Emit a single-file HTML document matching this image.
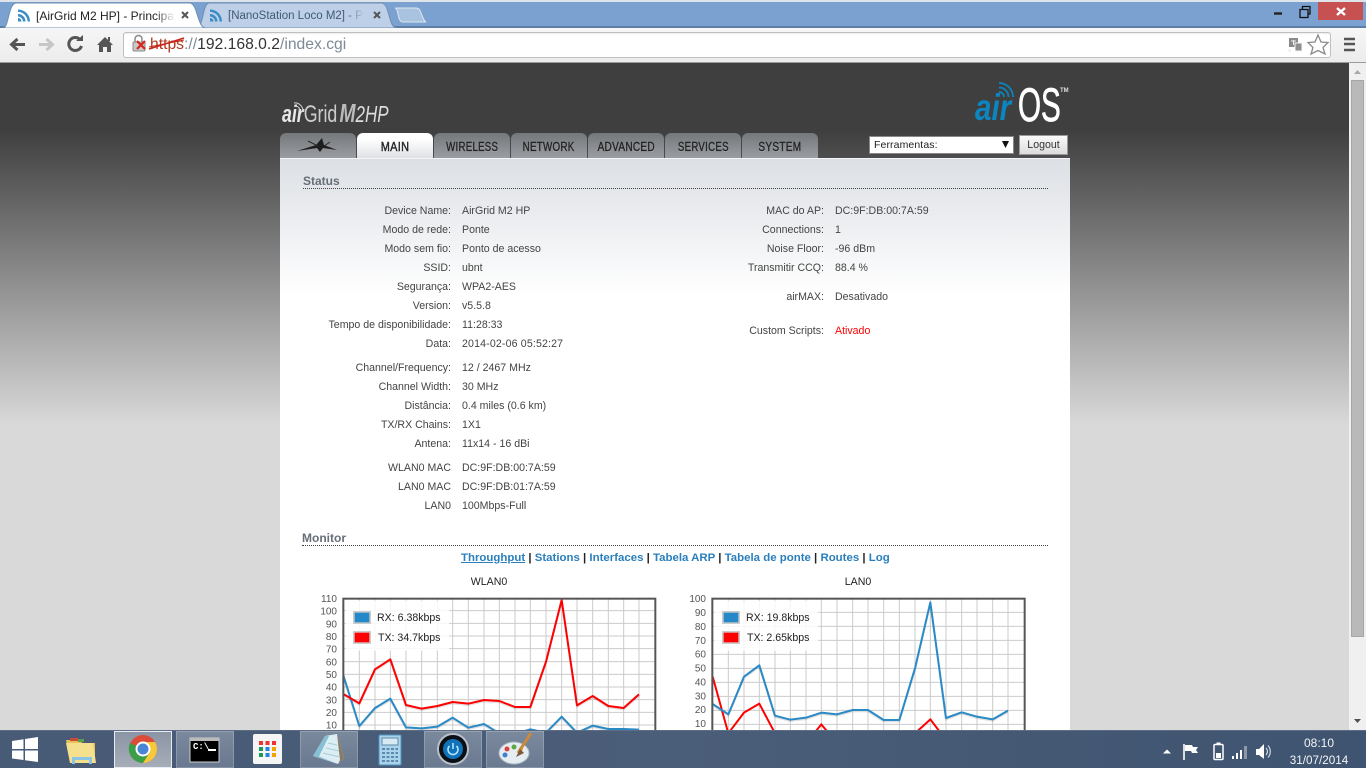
<!DOCTYPE html>
<html><head><meta charset="utf-8"><title>airOS</title>
<style>
html,body{margin:0;padding:0;width:1366px;height:768px;overflow:hidden;font-family:"Liberation Sans",sans-serif}
#root{position:relative;width:1366px;height:768px;overflow:hidden;background:#d9d9d9}
.a{position:absolute;white-space:nowrap}
.l,.v{position:absolute;white-space:nowrap;font-size:10.6px;line-height:14px;color:#444;margin-top:1px}
.l{text-align:right;width:200px}
.tab{position:absolute;top:133px;height:25px;width:76px;border-radius:6px 6px 0 0;background:linear-gradient(#74777a,#9a9da2);text-align:center}
.tab span{display:inline-block;font-size:13px;line-height:27px;color:#262626;font-weight:normal;text-shadow:0 1px 0 rgba(255,255,255,.25);-webkit-text-stroke:.4px #222;letter-spacing:.4px}
.btn{position:absolute;top:731px;height:37px;background:linear-gradient(rgba(255,255,255,.28),rgba(255,255,255,.18));box-shadow:inset 0 0 0 1px rgba(255,255,255,.2)}
.yl{font-size:10px;fill:#555;font-family:"Liberation Sans",sans-serif;text-anchor:end}
.lg{font-size:10.6px;fill:#222;font-family:"Liberation Sans",sans-serif}
a{color:#2a7fbd;text-decoration:none}
</style></head><body><div id="root">

<!-- page background -->
<div class="a" style="left:0;top:63px;width:1349px;height:667px;background:linear-gradient(#3f3f3f 0,#3f3f3f 67px,#d9d9d9 362px)"></div>

<!-- logos -->
<div class="a" style="left:282px;top:98px;color:#e8e8e8;font-size:24px;line-height:30px;transform-origin:0 0;transform:scaleX(.74)"><i style="font-weight:bold">air</i><span style="color:#ccc;">Grid</span><i style="font-weight:bold;color:#bbb;font-size:26px;margin:0 0 0 3px">M</i><i style="color:#ddd;font-size:23px">2HP</i></div>
<svg class="a" style="left:292px;top:100px" width="12" height="12" fill="none" stroke="#cfcfcf" stroke-width="1"><path d="M2 6a5 5 0 0 1 6 5M2 3a8 8 0 0 1 9 8"/></svg>

<div class="a" style="left:975px;top:88px;color:#0b86c0;font-size:37px;line-height:40px;font-weight:bold;font-style:italic;transform-origin:0 0;transform:scaleX(.8)">air</div>
<div class="a" style="left:1018px;top:80px;color:#fff;font-size:47px;line-height:50px;transform-origin:0 0;transform:scaleX(.63);-webkit-text-stroke:.8px #fff">OS</div>
<div class="a" style="left:1060px;top:87px;color:#ddd;font-size:6px;line-height:8px;font-weight:bold">TM</div>
<svg class="a" style="left:997px;top:81px" width="18" height="18" fill="none" stroke="#0b86c0" stroke-width="1.700"><path d="M2 11a5 5 0 0 1 5 5M2 6.500a9.500 9.500 0 0 1 9.500 9.500M2 2a14 14 0 0 1 14 14"/></svg>

<!-- tabs -->
<div class="tab" style="left:280px"><svg width="76" height="25" style="display:block"><path d="M17 18 36 12 42 5 44 12 57 17 43 15 40 19 37 15Z" fill="#1e1e1e"/><path d="M28 8 38 13M50 9 44 13" stroke="#2a2a2a" stroke-width="1"/></svg></div>
<div class="tab" style="left:357px;background:linear-gradient(#fff 0,#fff 6px,#dfe1e5 25px)"><span style="transform:scaleX(.84)">MAIN</span></div>
<div class="tab" style="left:434px"><span style="transform:scaleX(.74)">WIRELESS</span></div>
<div class="tab" style="left:511px"><span style="transform:scaleX(.75)">NETWORK</span></div>
<div class="tab" style="left:588px"><span style="transform:scaleX(.77)">ADVANCED</span></div>
<div class="tab" style="left:665px"><span style="transform:scaleX(.74)">SERVICES</span></div>
<div class="tab" style="left:742px"><span style="transform:scaleX(.77)">SYSTEM</span></div>

<!-- tools -->
<div class="a" style="left:869px;top:136px;width:143px;height:16px;background:#fff;border:1px solid #888;font-size:10.5px;line-height:17px;color:#222;text-indent:4px;letter-spacing:.1px">Ferramentas:</div>
<svg class="a" style="left:1001px;top:141px" width="9" height="8"><path d="M1 0H8L4.500 7Z" fill="#111"/></svg>
<div class="a" style="left:1019px;top:135px;width:47px;height:18px;background:linear-gradient(#fafafa,#dcdcdc);border:1px solid #999;font-size:10.6px;line-height:19px;color:#333;text-align:center">Logout</div>

<!-- panel -->
<div class="a" style="left:280px;top:158px;width:790px;height:572px;border-top:0;background:linear-gradient(#dcdfe4 0,#fff 137px)">
<div class="a" style="left:0;top:0;width:790px;height:1px;background:#f4f5f7"></div></div>

<div class="a" style="left:303px;top:174px;font-size:12px;line-height:14px;font-weight:bold;color:#666e78">Status</div>
<div class="a" style="left:303px;top:188px;width:745px;height:0;border-top:1px dotted #444"></div>

<div class="l" style="left:251px;top:203px">Device Name:</div><div class="v" style="left:462px;top:203px">AirGrid M2 HP</div>
<div class="l" style="left:251px;top:222px">Modo de rede:</div><div class="v" style="left:462px;top:222px">Ponte</div>
<div class="l" style="left:251px;top:241px">Modo sem fio:</div><div class="v" style="left:462px;top:241px">Ponto de acesso</div>
<div class="l" style="left:251px;top:260px">SSID:</div><div class="v" style="left:462px;top:260px">ubnt</div>
<div class="l" style="left:251px;top:279px">Segurança:</div><div class="v" style="left:462px;top:279px">WPA2-AES</div>
<div class="l" style="left:251px;top:298px">Version:</div><div class="v" style="left:462px;top:298px">v5.5.8</div>
<div class="l" style="left:251px;top:317px">Tempo de disponibilidade:</div><div class="v" style="left:462px;top:317px">11:28:33</div>
<div class="l" style="left:251px;top:336px">Data:</div><div class="v" style="left:462px;top:336px;letter-spacing:.15px">2014-02-06 05:52:27</div>
<div class="l" style="left:251px;top:360px">Channel/Frequency:</div><div class="v" style="left:462px;top:360px">12 / 2467 MHz</div>
<div class="l" style="left:251px;top:379px">Channel Width:</div><div class="v" style="left:462px;top:379px">30 MHz</div>
<div class="l" style="left:251px;top:398px">Distância:</div><div class="v" style="left:462px;top:398px">0.4 miles (0.6 km)</div>
<div class="l" style="left:251px;top:417px">TX/RX Chains:</div><div class="v" style="left:462px;top:417px">1X1</div>
<div class="l" style="left:251px;top:436px">Antena:</div><div class="v" style="left:462px;top:436px">11x14 - 16 dBi</div>
<div class="l" style="left:251px;top:460px">WLAN0 MAC</div><div class="v" style="left:462px;top:460px">DC:9F:DB:00:7A:59</div>
<div class="l" style="left:251px;top:479px">LAN0 MAC</div><div class="v" style="left:462px;top:479px">DC:9F:DB:01:7A:59</div>
<div class="l" style="left:251px;top:498px">LAN0</div><div class="v" style="left:462px;top:498px">100Mbps-Full</div>

<div class="l" style="left:624px;top:203px">MAC do AP:</div><div class="v" style="left:835px;top:203px">DC:9F:DB:00:7A:59</div>
<div class="l" style="left:624px;top:222px">Connections:</div><div class="v" style="left:835px;top:222px">1</div>
<div class="l" style="left:624px;top:241px">Noise Floor:</div><div class="v" style="left:835px;top:241px">-96 dBm</div>
<div class="l" style="left:624px;top:260px">Transmitir CCQ:</div><div class="v" style="left:835px;top:260px">88.4 %</div>
<div class="l" style="left:624px;top:289px">airMAX:</div><div class="v" style="left:835px;top:289px">Desativado</div>
<div class="l" style="left:624px;top:323px">Custom Scripts:</div><div class="v" style="left:835px;top:323px;color:#f00">Ativado</div>

<div class="a" style="left:302px;top:531px;font-size:12px;line-height:14px;font-weight:bold;color:#666e78">Monitor</div>
<div class="a" style="left:302px;top:545px;width:746px;height:0;border-top:1px dotted #444"></div>

<div class="a" style="left:461px;top:551px;font-size:11.45px;line-height:14px;font-weight:bold;color:#222"><a style="text-decoration:underline">Throughput</a> | <a>Stations</a> | <a>Interfaces</a> | <a>Tabela ARP</a> | <a>Tabela de ponte</a> | <a>Routes</a> | <a>Log</a></div>

<div class="a" style="left:439px;top:575px;width:100px;text-align:center;font-size:10.6px;line-height:14px;color:#222">WLAN0</div>
<div class="a" style="left:808px;top:575px;width:100px;text-align:center;font-size:10.6px;line-height:14px;color:#222">LAN0</div>

<!-- WLAN chart -->
<svg class="a" style="left:300px;top:570px" width="370" height="165">
<g transform="scale(.33333)" fill="none">
<path stroke="#cbcbcb" stroke-width="3" d="M178 84V495M225 84V495M271 84V495M318 84V495M365 84V495M412 84V495M458 84V495M505 84V495M552 84V495M598 84V495M645 84V495M691 84V495M738 84V495M785 84V495M831 84V495M878 84V495M925 84V495M971 84V495M1017 84V495M128 122H1068M128 160H1068M128 198H1068M128 236H1068M128 275H1068M128 313H1068M128 351H1068M128 389H1068M128 427H1068M128 465H1068"/>
<polyline transform="translate(0,4)" stroke="rgba(0,0,0,.12)" stroke-width="6" points="130,316 178,468 225,414 271,386 318,472 365,475 412,470 458,443 505,473 552,462 598,490 645,492 691,478 738,488 785,440 831,488 878,467 925,477 971,477 1017,479"/>
<polyline transform="translate(0,4)" stroke="rgba(0,0,0,.12)" stroke-width="6" points="130,372 178,400 225,298 271,268 318,405 365,416 412,408 458,396 505,401 552,390 598,393 645,411 691,411 738,275 785,90 831,406 878,378 925,408 971,414 1017,373"/>
<polyline stroke="#2a8ac6" stroke-width="6" stroke-linejoin="round" points="130,316 178,468 225,414 271,386 318,472 365,475 412,470 458,443 505,473 552,462 598,490 645,492 691,478 738,488 785,440 831,488 878,467 925,477 971,477 1017,479"/>
<polyline stroke="#f00" stroke-width="6" stroke-linejoin="round" points="130,372 178,400 225,298 271,268 318,405 365,416 412,408 458,396 505,401 552,390 598,393 645,411 691,411 738,275 785,90 831,406 878,378 925,408 971,414 1017,373"/>
<rect x="130" y="86" width="936" height="420" stroke="#555" stroke-width="6"/>
<rect x="136" y="92" width="312" height="150" fill="#fff" fill-opacity=".85"/>
<rect x="161.500" y="125.500" width="49" height="34" fill="#2589c9" stroke="#ccc" stroke-width="5"/>
<rect x="161.500" y="185.500" width="49" height="34" fill="#f00" stroke="#ccc" stroke-width="5"/>
</g>
<text class="lg" x="77" y="51">RX: 6.38kbps</text>
<text class="lg" x="78" y="71">TX: 34.7kbps</text>
<text class="yl" x="37" y="32">110</text><text class="yl" x="37" y="44.500">100</text><text class="yl" x="37" y="57.500">90</text><text class="yl" x="37" y="70">80</text><text class="yl" x="37" y="82.500">70</text><text class="yl" x="37" y="95.500">60</text><text class="yl" x="37" y="108">50</text><text class="yl" x="37" y="120.500">40</text><text class="yl" x="37" y="133.500">30</text><text class="yl" x="37" y="146">20</text><text class="yl" x="37" y="158.500">10</text>
</svg>

<!-- LAN chart -->
<svg class="a" style="left:670px;top:570px" width="370" height="165">
<g transform="scale(.33333)" fill="none">
<path stroke="#cbcbcb" stroke-width="3" d="M175 84V495M222 84V495M268 84V495M315 84V495M361 84V495M408 84V495M454 84V495M501 84V495M548 84V495M594 84V495M641 84V495M688 84V495M735 84V495M781 84V495M828 84V495M875 84V495M921 84V495M968 84V495M1014 84V495M125 127H1066M125 169H1066M125 211H1066M125 253H1066M125 295H1066M125 337H1066M125 379H1066M125 421H1066M125 463H1066"/>
<polyline transform="translate(0,4)" stroke="rgba(0,0,0,.12)" stroke-width="6" points="128,402 175,433 222,320 268,286 315,437 361,449 408,443 454,428 501,433 548,420 594,420 641,450 688,450 735,295 781,97 828,444 875,427 921,440 968,448 1014,422"/>
<polyline stroke="#f00" stroke-width="6" stroke-linejoin="round" points="128,320 175,490 222,428 268,401 315,490 361,540 408,520 454,463 501,520 548,540 688,540 735,490 781,448 828,510"/>
<polyline stroke="#2a8ac6" stroke-width="6" stroke-linejoin="round" points="128,402 175,433 222,320 268,286 315,437 361,449 408,443 454,428 501,433 548,420 594,420 641,450 688,450 735,295 781,97 828,444 875,427 921,440 968,448 1014,422"/>
<rect x="127" y="86" width="937" height="420" stroke="#555" stroke-width="6"/>
<rect x="133" y="92" width="312" height="150" fill="#fff" fill-opacity=".85"/>
<rect x="158.500" y="125.500" width="49" height="34" fill="#2589c9" stroke="#ccc" stroke-width="5"/>
<rect x="158.500" y="185.500" width="49" height="34" fill="#f00" stroke="#ccc" stroke-width="5"/>
</g>
<text class="lg" x="76" y="51">RX: 19.8kbps</text>
<text class="lg" x="77" y="71">TX: 2.65kbps</text>
<text class="yl" x="36" y="32">100</text><text class="yl" x="36" y="46">90</text><text class="yl" x="36" y="60">80</text><text class="yl" x="36" y="74">70</text><text class="yl" x="36" y="87.500">60</text><text class="yl" x="36" y="101.500">50</text><text class="yl" x="36" y="115.500">40</text><text class="yl" x="36" y="129.500">30</text><text class="yl" x="36" y="143">20</text><text class="yl" x="36" y="157">10</text>
</svg>

<!-- page scrollbar -->
<div class="a" style="left:1349px;top:63px;width:17px;height:667px;background:#f0f0f0"></div>
<div class="a" style="left:1351px;top:80px;width:11px;height:555px;background:#b9b9b9;border:1px solid #a6a6a6"></div>
<svg class="a" style="left:1349px;top:63px" width="17" height="667"><path d="M5 11 8.500 7 12 11Z" fill="#a8a8a8"/><path d="M5 656H12L8.500 660Z" fill="#505050"/></svg>

<!-- window frame / tab strip -->
<div class="a" style="left:0;top:0;width:1366px;height:28px;background:#7aa1cf;border-top:2px solid #dfe4ea;box-sizing:border-box"></div>
<div class="a" style="left:0;top:26px;width:1366px;height:2px;background:#5d7ea6"></div>
<div class="a" style="left:1318px;top:2px;width:45px;height:18px;background:#c75050"></div>
<svg class="a" style="left:1270px;top:2px" width="92" height="20" fill="none">
<path d="M4 11.500H12" stroke="#222" stroke-width="2.400"/>
<path d="M30 7.500h8v8h-8zM32.500 7V4.500H40V12h-2" stroke="#111" stroke-width="1.300"/>
<path d="M67 6 75 13M75 6 67 13" stroke="#fff" stroke-width="2.400"/>
</svg>
<svg class="a" style="left:0;top:0" width="440" height="30">
<path d="M196 28C204 28 202 4 209 3H382C390 4 388 28 397 28Z" fill="#bdd0e7" stroke="#6f8fb5"/>
<path d="M396 8.500Q394 8 398 8H416C419 8 420 10 421 13 423 18 424 21 426 22H403C400 22 399 19 398 14 397 10 397 9 396 8.500Z" fill="#a9c2df" stroke="#dbe6f2"/>
<path d="M3 28C9 28 8 4 16 3H190C198 4 197 28 206 28Z" fill="#fff" stroke="#6f8fb5"/>
<path d="M18 9.500a12 12 0 0 1 12 12h-2.400a9.600 9.600 0 0 0-9.600-9.600zM18 14a7.500 7.500 0 0 1 7.500 7.500h-2.500a5 5 0 0 0-5-5zM18 18a3.500 3.500 0 0 1 3.500 3.500H18z" fill="#3a8bc6"/>
<path d="M210 9.500a12 12 0 0 1 12 12h-2.400a9.600 9.600 0 0 0-9.600-9.600zM210 14a7.500 7.500 0 0 1 7.500 7.500h-2.500a5 5 0 0 0-5-5zM210 18a3.500 3.500 0 0 1 3.500 3.500H210z" fill="#3a8bc6"/>
<path d="M182 12 188 18M188 12 182 18" stroke="#555" stroke-width="2"/>
<path d="M374 12 380 18M380 12 374 18" stroke="#555" stroke-width="2"/>
</svg>
<div class="a" style="left:36px;top:9px;width:138px;overflow:hidden;font-size:12px;line-height:14px;color:#222">[AirGrid M2 HP] - Principal</div>
<div class="a" style="left:228px;top:9px;width:135px;overflow:hidden;font-size:11.5px;line-height:14px;color:#3f5a75">[NanoStation Loco M2] - Principal</div>
<div class="a" style="left:155px;top:7px;width:20px;height:18px;background:linear-gradient(90deg,rgba(255,255,255,0),#fff)"></div>
<div class="a" style="left:345px;top:7px;width:20px;height:18px;background:linear-gradient(90deg,rgba(189,208,231,0),#bdd0e7)"></div>

<!-- toolbar -->
<div class="a" style="left:0;top:28px;width:1366px;height:34px;background:linear-gradient(#f6f6f6,#ececec);border-bottom:1px solid #9c9c9c"></div>
<div class="a" style="left:123px;top:32px;width:1206px;height:24px;background:#fff;border:1px solid #c0c0c0;border-radius:3px;box-shadow:inset 0 1px 1px rgba(0,0,0,.08)"></div>
<svg class="a" style="left:0;top:28px" width="160" height="34" fill="none">
<path d="M25 16.500H13M17.500 11 11.500 16.500 17.500 22" stroke="#555" stroke-width="3"/>
<path d="M39 16.500H51M46.500 11 52.500 16.500 46.500 22" stroke="#c6c6c6" stroke-width="3"/>
<path d="M80 11.500A6.500 6.500 0 1 0 81.500 18" stroke="#555" stroke-width="3"/>
<path d="M76 13H83V7Z" fill="#555"/>
<path d="M97 17 105 9 113 17H111V24H107V19H103V24H99V17Z" fill="#555"/>
<path d="M108 9h2v4h-2z" fill="#555"/>
<rect x="133" y="14" width="12" height="9" rx="1" fill="#c9c9c9" stroke="#8a8a8a"/>
<path d="M135 14V11a3.500 3.500 0 0 1 7 0v3" stroke="#8a8a8a" stroke-width="1.500"/>
<path d="M137 13 145 21M145 13 137 21" stroke="#d8241b" stroke-width="2.200"/>
</svg>
<div class="a" style="left:150px;top:36px;font-size:15.7px;line-height:18px;color:#7d8a96"><span style="color:#b03a1e">https</span>://<span style="color:#333">192.168.0.2</span>/index.cgi</div>
<svg class="a" style="left:148px;top:36px" width="40" height="16"><path d="M1 13 36 2" stroke="#c8281c" stroke-width="1.500"/><path d="M1 11 36 4" stroke="#c8281c" stroke-width="1"/></svg>
<svg class="a" style="left:1285px;top:33px" width="70" height="24" fill="none">
<rect x="4" y="5" width="9" height="9" fill="#8a8a8a"/><rect x="10" y="10" width="7" height="8" fill="#8f8f8f" stroke="#f6f6f6"/>
<path d="M6 8h5M8.500 7v5M3 16l3 3M6 16l-3 3" stroke="#eee"/>
<path d="M33 2 36 9 43 9.500 38 14.500 40 21 33 17.500 26 21 28 14.500 23 9.500 30 9Z" fill="#fff" stroke="#8a8a8a" stroke-width="1.300"/>
<path d="M59 6H73M59 11H73M59 17H73" stroke="#555" stroke-width="2.600"/>
</svg>

<!-- taskbar -->
<div class="a" style="left:0;top:730px;width:1366px;height:38px;background:linear-gradient(90deg,#475a76 0,#4a5d79 50%,#3f5470 100%);border-top:1px solid #5c6d86;box-sizing:border-box"></div>
<div class="btn" style="left:114px;width:58px;background:linear-gradient(#8a94a4,#a7aeb9);box-shadow:inset 0 0 0 1px #e8ebf0"></div>
<div class="btn" style="left:176px;width:58px"></div>
<div class="btn" style="left:300px;width:58px"></div>
<div class="btn" style="left:424px;width:58px"></div>
<div class="btn" style="left:486px;width:58px"></div>

<svg class="a" style="left:0;top:730px" width="560" height="38">
<!-- windows -->
<path d="M12 11 23.500 9.300V19H12ZM25 9 38 7V19H25ZM12 20.500H23.500V30L12 28.500ZM25 20.500H38V32L25 30.200Z" fill="#fff"/>
<!-- explorer -->
<path d="M66 10H80L82 13H95V32H70Z" fill="#e6c25a"/>
<path d="M66 13H93L96 33H70Z" fill="#f5e08e"/>
<rect x="70" y="8" width="8" height="3" fill="#cc4a3a"/><rect x="78" y="9" width="6" height="3" fill="#5aa04a"/>
<path d="M72 27H92V34H89V30H75V34H72Z" fill="#8cc6e4"/>
<!-- chrome -->
<circle cx="143" cy="19" r="14" fill="#dd4b39"/>
<path d="M143 19 136 31A14 14 0 0 1 130 13Z" fill="#3a9f48"/>
<path d="M136 31A14 14 0 0 0 143 33L150 22 143 19Z" fill="#3a9f48"/>
<path d="M143 33A14 14 0 0 0 157 19 14 14 0 0 0 155 12H143L150 22Z" fill="#f7c93a"/>
<circle cx="143" cy="19" r="6.500" fill="#4a86d8" stroke="#fff" stroke-width="2"/>
<!-- cmd -->
<rect x="190" y="8" width="29" height="24" fill="#000" stroke="#ccc"/><rect x="190" y="8" width="29" height="3" fill="#bbb"/>
<!-- apps -->
<rect x="253" y="4" width="29" height="30" rx="2" fill="#f5f5f5"/>
<g><rect x="259" y="11" width="4" height="4" fill="#e33"/><rect x="265.500" y="11" width="4" height="4" fill="#e33"/><rect x="272" y="11" width="4" height="4" fill="#e33"/>
<rect x="259" y="17" width="4" height="4" fill="#1a9a55"/><rect x="265.500" y="17" width="4" height="4" fill="#2a80e0"/><rect x="272" y="17" width="4" height="4" fill="#f4a400"/>
<rect x="259" y="23" width="4" height="4" fill="#1a9a55"/><rect x="265.500" y="23" width="4" height="4" fill="#2a80e0"/><rect x="272" y="23" width="4" height="4" fill="#f4a400"/></g>
<!-- notepad -->
<path d="M325 6 337 4 344 28 338 34 313 26Z" fill="#dceef3"/>
<path d="M313 26 325 6 329 6 319 26.500 338 34Z" fill="#86c0d2"/>
<path d="M338 34 344 28 337 4 340 30Z" fill="#8a7a60"/>
<path d="M328 13 337 15M326 18 339 21M323 23 340 27" stroke="#a6cdd9"/>
<!-- calc -->
<rect x="379" y="5" width="22" height="30" rx="1" fill="#a9d3ea" stroke="#4f93bd"/>
<rect x="382" y="8" width="16" height="7" fill="#d7eaf4" stroke="#5b8aa8"/>
<path d="M382 19H398M382 23H398M382 27H398M382 31H398" stroke="#5e8bad" stroke-width="2" stroke-dasharray="3 1.500"/>
<!-- power -->
<circle cx="453" cy="19" r="15" fill="#0b0f16" stroke="#b9c0c8" stroke-width="2"/>
<circle cx="453" cy="19" r="10" fill="#1172b8"/>
<path d="M449.500 16A5 5 0 1 0 456.500 16M453 13V19" fill="none" stroke="#aee2ff" stroke-width="1.600"/>
<!-- paint -->
<ellipse cx="514" cy="23" rx="15" ry="11" fill="#e6edf2" stroke="#a9b6c2"/>
<circle cx="507" cy="19" r="2.500" fill="#d8443a"/><circle cx="514" cy="17" r="2.500" fill="#5aa848"/><circle cx="505" cy="25" r="2.500" fill="#3b82c8"/><circle cx="521" cy="19" r="2" fill="#e8b53a"/>
<path d="M531 3 518 23" stroke="#c98a3a" stroke-width="3"/>
<path d="M520 19 516 27 524 23Z" fill="#7a5a3a"/>
</svg>
<div class="a" style="left:193px;top:742px;font-size:9px;line-height:10px;font-family:'Liberation Mono',monospace;font-weight:bold;color:#fff">C:\</div>
<div class="a" style="left:208px;top:749px;width:8px;height:2px;background:#fff"></div>

<!-- tray -->
<svg class="a" style="left:1160px;top:738px" width="120" height="24" fill="none">
<path d="M3 15.500 7 11.500 11 15.500Z" fill="#fff"/>
<path d="M24 6V22" stroke="#fff" stroke-width="1.600"/><path d="M25 7H32L33 9H38L36 12 38 15H32L31 13H25Z" fill="#fff"/>
<rect x="54" y="6.500" width="9" height="15" rx="1" stroke="#fff" stroke-width="1.500"/><rect x="56" y="15" width="5" height="5" fill="#fff"/><rect x="56.500" y="4.500" width="4" height="2" fill="#fff"/>
<path d="M72 18h2v3h-2zM76 15h2v6h-2zM80 12h2v9h-2z" fill="#fff"/><path d="M84 8h3v13h-3z" fill="#8f98a6"/>
<path d="M96 11H99L104 6V21L99 17H96Z" fill="#fff"/>
<path d="M106 10a5 5 0 0 1 0 7M108 7.500a9 9 0 0 1 0 12" stroke="#cfd6df" stroke-width="1.200"/>
</svg>
<div class="a" style="left:1279px;top:736px;width:80px;text-align:center;font-size:12px;line-height:15px;color:#f2f4f7">08:10</div>
<div class="a" style="left:1279px;top:753px;width:80px;text-align:center;font-size:11.7px;line-height:15px;color:#f2f4f7">31/07/2014</div>

</div></body></html>
